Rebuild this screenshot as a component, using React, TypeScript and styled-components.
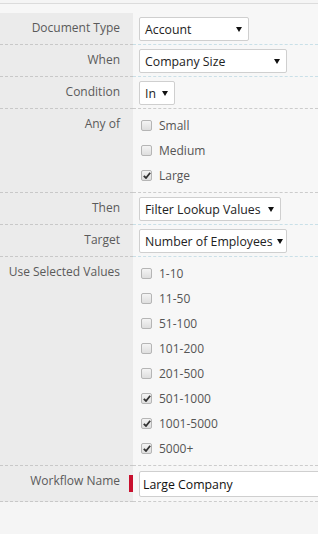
import React from "react";
import styled, { createGlobalStyle, css } from "styled-components";

const Global = createGlobalStyle`
  html, body { margin: 0; padding: 0; background: #f5f5f5; overflow: hidden; }
  body { font-family: "Open Sans", "Noto Sans", sans-serif; font-size: 12px; }
`;

const Page = styled.div`
  width: 318px;
  height: 534px;
  background: #f5f5f5;
  overflow: hidden;
`;

const TopStrip = styled.div`
  height: 9px;
  margin-top: 3px;
  border-top: 1px solid #dcdcdc;
  background: #f7f7f7;
`;

const Form = styled.div`
  display: flex;
  flex-direction: column;
`;

const Row = styled.div`
  display: flex;
`;

const Label = styled.div<{ $required?: boolean }>`
  position: relative;
  width: 133px;
  flex: none;
  box-sizing: border-box;
  background: #ebebeb;
  color: #5a5a5a;
  text-align: right;
  padding: 6px 13px 0 0;
  line-height: 18px;
  border-bottom: 1px dashed #c8c8c8;
  ${(p) =>
    p.$required &&
    css`
      &::after {
        content: "";
        position: absolute;
        right: 0;
        top: 9px;
        width: 4px;
        height: 17px;
        background: #c8102e;
      }
    `}
`;

const Field = styled.div<{ $accent?: boolean; $pad?: string }>`
  flex: 1;
  min-width: 0;
  background: #f7f7f7;
  padding: ${(p) => p.$pad ?? "4px 0 3px 6px"};
  border-bottom: 1px dashed ${(p) => (p.$accent ? "#c9e0e8" : "#cccccc")};
  display: flex;
  flex-direction: column;
  align-items: flex-start;
`;

const Select = styled.div<{ $w: number }>`
  width: ${(p) => p.$w}px;
  height: 24px;
  box-sizing: border-box;
  background: #fff;
  border: 1px solid #cfcfcf;
  border-radius: 2px;
  display: flex;
  align-items: center;
  justify-content: space-between;
  padding: 0 6px 0 5px;
  color: #222;
  font-size: 12.3px;
  white-space: nowrap;
`;

const Arrow = styled.span`
  width: 0;
  height: 0;
  border-left: 3px solid transparent;
  border-right: 3px solid transparent;
  border-top: 5px solid #111;
  flex: none;
  margin-left: 4px;
`;

const CheckRow = styled.label`
  height: 25px;
  display: flex;
  align-items: center;
  gap: 7px;
  padding-left: 2px;
  color: #555;
  font-size: 12px;
`;

const Box = styled.span`
  width: 11px;
  height: 11px;
  box-sizing: border-box;
  border: 1px solid #b5b5b5;
  border-radius: 2px;
  background: linear-gradient(#f4f4f4, #dedede);
  display: flex;
  align-items: center;
  justify-content: center;
  flex: none;
`;

const TextInput = styled.div`
  width: 220px;
  height: 26px;
  box-sizing: border-box;
  background: #fff;
  border: 1px solid #cfcfcf;
  border-radius: 2px;
  padding: 0 3px;
  display: flex;
  align-items: center;
  color: #111;
  font-size: 12.3px;
  white-space: nowrap;
`;

const Check = () => (
  <svg width="8" height="7" viewBox="0 0 8 7">
    <path d="M0.8 3.8 L3 6 L7.2 0.8" fill="none" stroke="#333" strokeWidth="1.8" />
  </svg>
);

const Checkbox = ({ label, on }: { label: string; on?: boolean }) => (
  <CheckRow>
    <Box>{on && <Check />}</Box>
    {label}
  </CheckRow>
);

const SelectRow = ({ label, value, w }: { label: string; value: string; w: number }) => (
  <Row>
    <Label>{label}</Label>
    <Field $accent>
      <Select $w={w}>
        {value}
        <Arrow />
      </Select>
    </Field>
  </Row>
);

const sizes = [
  { l: "Small", on: false },
  { l: "Medium", on: false },
  { l: "Large", on: true },
];

const ranges = [
  { l: "1-10", on: false },
  { l: "11-50", on: false },
  { l: "51-100", on: false },
  { l: "101-200", on: false },
  { l: "201-500", on: false },
  { l: "501-1000", on: true },
  { l: "1001-5000", on: true },
  { l: "5000+", on: true },
];

export default function App() {
  return (
    <Page>
      <Global />
      <TopStrip />
      <Form>
        <SelectRow label="Document Type" value="Account" w={110} />
        <SelectRow label="When" value="Company Size" w={148} />
        <Row>
          <Label>Condition</Label>
          <Field>
            <Select $w={36}>
              In
              <Arrow />
            </Select>
          </Field>
        </Row>
        <Row>
          <Label>Any of</Label>
          <Field $pad="4px 0 4px 6px">
            {sizes.map((s) => (
              <Checkbox key={s.l} label={s.l} on={s.on} />
            ))}
          </Field>
        </Row>
        <SelectRow label="Then" value="Filter Lookup Values" w={142} />
        <SelectRow label="Target" value="Number of Employees" w={148} />
        <Row>
          <Label>Use Selected Values</Label>
          <Field $pad="4px 0 4px 6px">
            {ranges.map((s) => (
              <Checkbox key={s.l} label={s.l} on={s.on} />
            ))}
          </Field>
        </Row>
        <Row>
          <Label $required>Workflow Name</Label>
          <Field $pad="5px 0 4px 6px">
            <TextInput>Large Company</TextInput>
          </Field>
        </Row>
      </Form>
    </Page>
  );
}
